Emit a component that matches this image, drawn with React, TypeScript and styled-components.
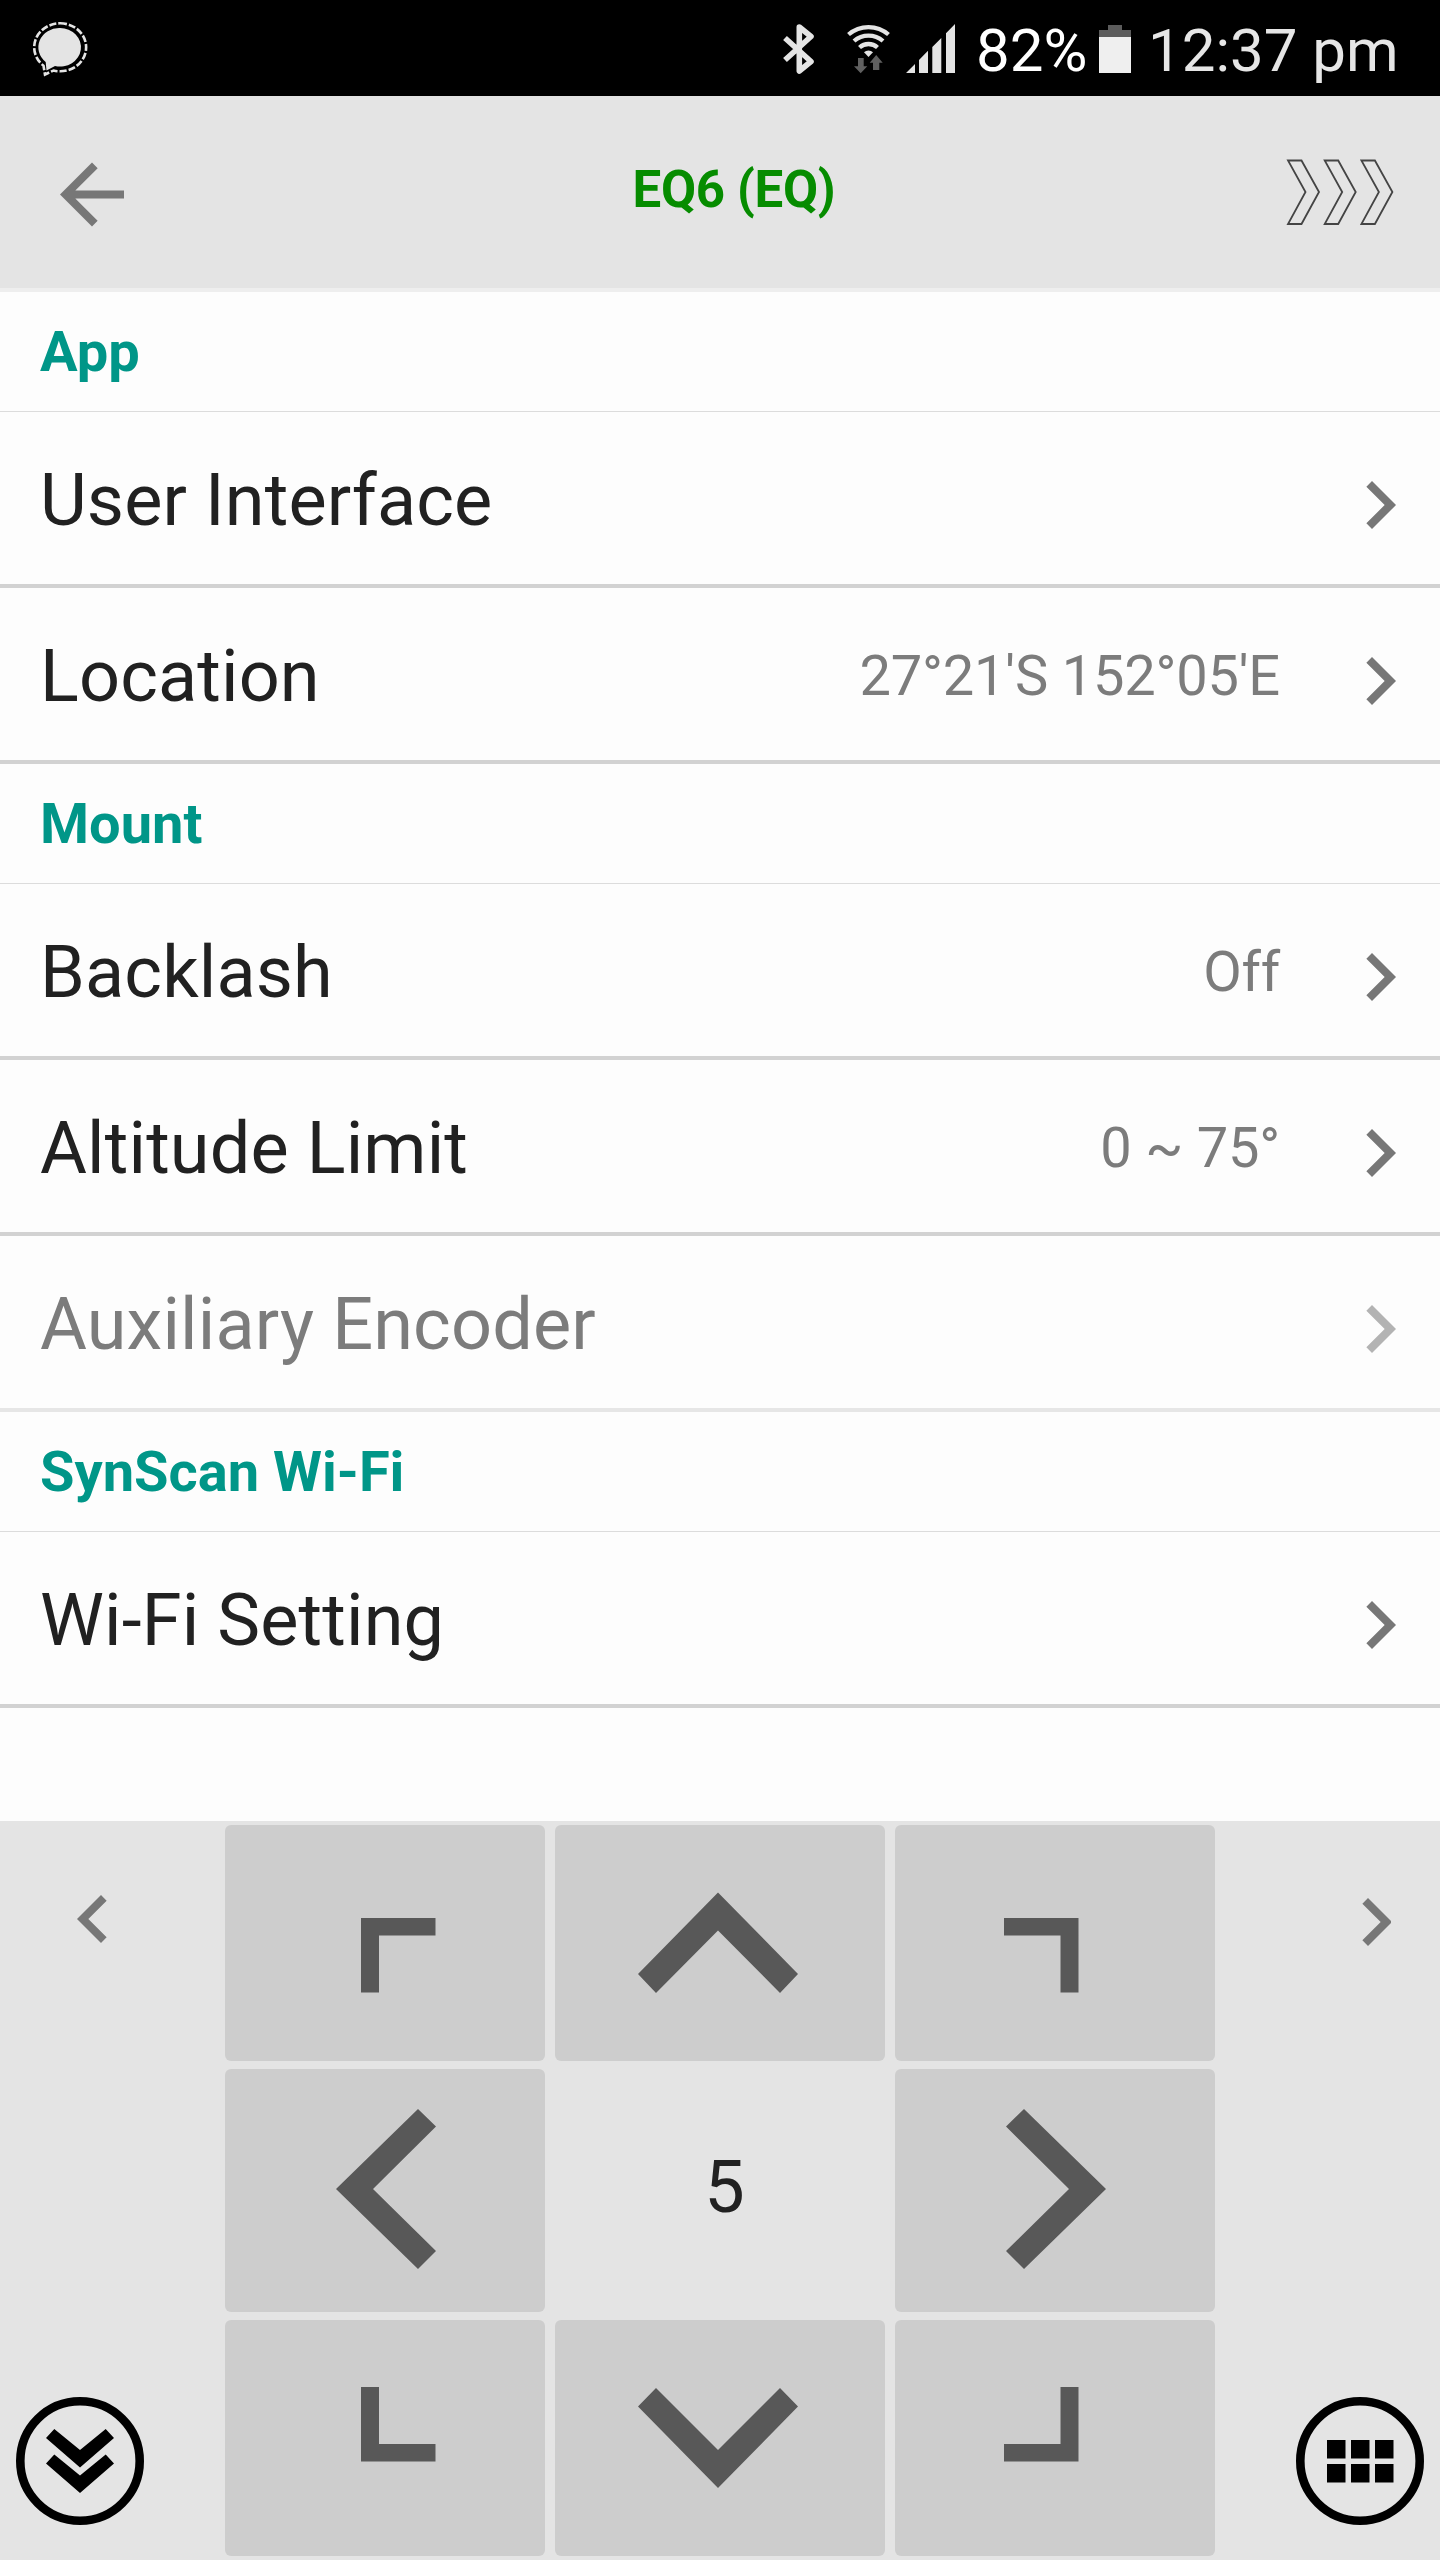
import React from "react";
import styled, { createGlobalStyle } from "styled-components";

const Global = createGlobalStyle`
  *{box-sizing:border-box}
  body{margin:0;background:#fdfdfd;font-family:Roboto,"Liberation Sans",sans-serif}
`;

const Screen = styled.div`
  width: 1440px; height: 2560px; display: flex; flex-direction: column;
  background: #fdfdfd; overflow: hidden;
`;
const StatusBar = styled.div`
  height: 96px; background: #000; display: flex; align-items: center;
  justify-content: space-between; flex: none;
  svg { display: block; flex: none; }
`;
const StatusIcons = styled.div`display: flex; align-items: center; height: 96px;`;
const StatusText = styled.span<{ $color: string; $left: number; $width: number }>`
  color: ${p => p.$color}; font-size: 60px; line-height: 70px; white-space: nowrap;
  margin-left: ${p => p.$left}px; width: ${p => p.$width}px; padding-top: 5px;
`;
const Header = styled.header`
  height: 196px; flex: none; background: #e4e4e4; border-bottom: 4px solid #eee;
  display: flex; align-items: center; justify-content: space-between;
  svg { display: block; flex: none; }
`;
const Title = styled.h1`
  margin: 0; font-size: 51px; line-height: 60px; font-weight: 700; color: #068c00;
  padding-bottom: 5px; white-space: nowrap; letter-spacing: -0.3px;
`;
const List = styled.main`flex: 1; min-height: 0;`;
const SectionTitle = styled.h2`
  margin: 0; height: 120px; padding: 27px 40px 0; border-bottom: 1px solid #dcdcdc;
  font-size: 56px; line-height: 66px; font-weight: 700; color: #009688;
`;
const Row = styled.div<{ $disabled?: boolean }>`
  height: 176px; display: flex; align-items: center; padding: 0 12px 0 40px;
  border-bottom: 4px solid ${p => (p.$disabled ? "#e6e6e6" : "#d2d2d2")};
  color: ${p => (p.$disabled ? "#7c7c7c" : "#212121")};
  svg { display: block; flex: none; margin-top: 14px; fill: ${p => (p.$disabled ? "#b3b3b3" : "#777")}; }
`;
const RowLabel = styled.span`
  flex: 1; font-size: 72px; line-height: 84px; padding-top: 5px; letter-spacing: 0.15px;
`;
const RowValue = styled.span`
  font-size: 56px; line-height: 66px; color: #7c7c7c; margin-right: 52px; padding-top: 3px;
  letter-spacing: -0.2px;
`;
const Pad = styled.section`
  height: 739px; flex: none; background: #e4e4e4; display: grid;
  grid-template-columns: 225px 990px 225px; padding: 4px 0;
  svg { display: block; flex: none; }
`;
const Side = styled.div<{ $top: number }>`
  display: flex; flex-direction: column; justify-content: space-between;
  padding: ${p => p.$top}px 16px 31px;
`;
const Keys = styled.div`
  display: grid; grid-template-columns: 320px 330px 320px; column-gap: 10px;
  grid-template-rows: 236px 243px 236px; row-gap: 8px;
`;
const Key = styled.button`
  border: 0; margin: 0; padding: 0; background: #cdcdcd; border-radius: 6px; overflow: hidden;
`;
const Rate = styled.div`
  display: flex; align-items: center; justify-content: center;
  font-size: 72px; line-height: 84px; color: #212121; padding: 0 0 5px 9px;
`;

const Chevron = () => (
  <svg width="96" height="96" viewBox="0 0 24 24">
    <path d="M10 6L8.59 7.41 13.17 12l-4.58 4.59L10 18l6-6z" />
  </svg>
);

const sections = [
  { title: "App", rows: [{ label: "User Interface" }, { label: "Location", value: "27°21'S 152°05'E" }] },
  {
    title: "Mount",
    rows: [
      { label: "Backlash", value: "Off" },
      { label: "Altitude Limit", value: "0 ~ 75°" },
      { label: "Auxiliary Encoder", disabled: true },
    ],
  },
  { title: "SynScan Wi-Fi", rows: [{ label: "Wi-Fi Setting" }] },
] as { title: string; rows: { label: string; value?: string; disabled?: boolean }[] }[];

/* Each key glyph is drawn in the coordinates of its own key. */
const keys: ({ name: string; w: number; h: number; d: string } | null)[] = [
  { name: "up-left", w: 320, h: 236, d: "M136 93h74.500v17.500h-56.500v57h-18z" },
  { name: "up", w: 330, h: 236, d: "M163 67.500L243 149L225 168L163 105.500L101 168L83 149z" },
  { name: "up-right", w: 320, h: 236, d: "M109 93h74.500v74.500h-18v-57h-56.500z" },
  { name: "left", w: 320, h: 243, d: "M111 120L193 40L211 57.500L148 120L211 182L193 200z" },
  null,
  { name: "right", w: 320, h: 243, d: "M211 120L129 40L111 57.500L174 120L111 182L129 200z" },
  { name: "down-left", w: 320, h: 236, d: "M136 67h18v57h56.500v17.500h-74.500z" },
  { name: "down", w: 330, h: 236, d: "M163 168L243 86.500L225 68L163 130L101 68L83 86.500z" },
  { name: "down-right", w: 320, h: 236, d: "M165.500 67h18v74.500h-74.500v-17.500h56.500z" },
];

export default function App() {
  return (
    <>
      <Global />
      <Screen>
        <StatusBar>
          <svg width="100" height="96" viewBox="0 0 100 96">
            <path
              d="M60 28a20.800 19.300 0 1 1-5 38L46.500 70.500l-.8-8.500A20.800 19.300 0 0 1 60 28z"
              fill="#e4e4e4"
            />
            <path
              d="M60 23.300a26 24 0 1 1-6.500 47.200L45 74.500 43.500 65.700A26 24 0 0 1 60 23.300z"
              fill="none" stroke="#e4e4e4" strokeWidth="2.600" strokeDasharray="7 2"
            />
          </svg>
          <StatusIcons>
            <svg width="196" height="96" viewBox="776 0 196 96">
              <path d="M785 38l26 23.500L799.300 71V27L811 36.500 785 60" fill="none" stroke="#e4e4e4" strokeWidth="5.600" strokeLinejoin="round" />
              <g fill="none" stroke="#e4e4e4" strokeWidth="4.300">
                <path d="M848.500 34.500A30.500 30.500 0 0 1 888.500 34.500" />
                <path d="M854 41A22 22 0 0 1 883 41" />
                <path d="M859.500 47.500A13.300 13.300 0 0 1 877.500 47.500" />
              </g>
              <path d="M864 52.300A6.500 6.500 0 0 1 873 52.300L868.500 57z" fill="#e4e4e4" />
              <path d="M858 58h5.700v8.300h3.600l-6.600 7-6.700-7h4zM873 70v-7.300h-3.300l6.500-7.700 6.500 7.700h-3.400V70z" fill="#606060" />
              <path d="M906 73l9-9v9zM919 73V60l9-9.300V73zM932.300 73V47l9-9v35zM946 73V33.300l9-9.300v49z" fill="#e4e4e4" />
            </svg>
            <StatusText $color="#fff" $left={4} $width={122}>82%</StatusText>
            <svg width="34" height="96" viewBox="1098 0 34 96">
              <path d="M1099 37v-7h9v-5h14v5h9v7z" fill="#5c5c5c" />
              <path d="M1099 37h32v36h-32z" fill="#efefef" />
            </svg>
            <StatusText $color="#e6e6e6" $left={16} $width={292}>12:37 pm</StatusText>
          </StatusIcons>
        </StatusBar>
        <Header>
          <svg width="184" height="192" viewBox="0 96 184 192">
            <path transform="translate(44 146.500) scale(4)" d="M20 11H7.830l5.590-5.590L12 4l-8 8 8 8 1.410-1.410L7.830 13H20v-2z" fill="#777" />
          </svg>
          <Title>EQ6 (EQ)</Title>
          <svg width="156" height="192" viewBox="1284 96 156 192">
            <g fill="none" stroke="#444" strokeWidth="1.800">
              {[1288, 1324.700, 1361.400].map(x => (
                <path key={x} d={`M${x} 160.500h13.500l17.500 31.500-17.500 32h-13.500l17.500-32z`} />
              ))}
            </g>
          </svg>
        </Header>
        <List>
          {sections.map(s => (
            <React.Fragment key={s.title}>
              <SectionTitle>{s.title}</SectionTitle>
              {s.rows.map(r => (
                <Row key={r.label} $disabled={r.disabled}>
                  <RowLabel>{r.label}</RowLabel>
                  {r.value && <RowValue>{r.value}</RowValue>}
                  <Chevron />
                </Row>
              ))}
            </React.Fragment>
          ))}
        </List>
        <Pad>
          <Side $top={46}>
            <svg width="160" height="96" viewBox="-29 0 160 96" fill="#777">
              <path transform="scale(4)" d="M14 6l1.410 1.410L10.830 12l4.580 4.590L14 18l-6-6z" />
            </svg>
            <svg width="128" height="128" viewBox="16 2397 128 128">
              <circle cx="80" cy="2461" r="59.700" fill="none" stroke="#000" strokeWidth="8.600" />
              <path d="M46 2438l8.300-9L80 2450l25.700-21 8.300 9-34 29.500zM46 2463.500l8.300-9L80 2475.500l25.700-21 8.300 9-34 29.500z" />
            </svg>
          </Side>
          <Keys>
            {keys.map(k =>
              k ? (
                <Key key={k.name} aria-label={k.name}>
                  <svg width={k.w} height={k.h} viewBox={`0 0 ${k.w} ${k.h}`}>
                    <path d={k.d} fill="#585858" />
                  </svg>
                </Key>
              ) : (
                <Rate key="rate">5</Rate>
              )
            )}
          </Keys>
          <Side $top={49}>
            <svg width="160" height="96" viewBox="-97 0 160 96" fill="#777">
              <path transform="scale(4)" d="M10 6L8.590 7.410 13.170 12l-4.580 4.590L10 18l6-6z" />
            </svg>
            <svg width="209" height="128" viewBox="1231 2397 209 128">
              <circle cx="1360" cy="2461" r="59.700" fill="none" stroke="#000" strokeWidth="8.600" />
              {[1327, 1351, 1375].map(x => (
                <path key={x} d={`M${x} 2440h18.500v18.500h-18.500zM${x} 2464h18.500v18.500h-18.500z`} />
              ))}
            </svg>
          </Side>
        </Pad>
      </Screen>
    </>
  );
}
